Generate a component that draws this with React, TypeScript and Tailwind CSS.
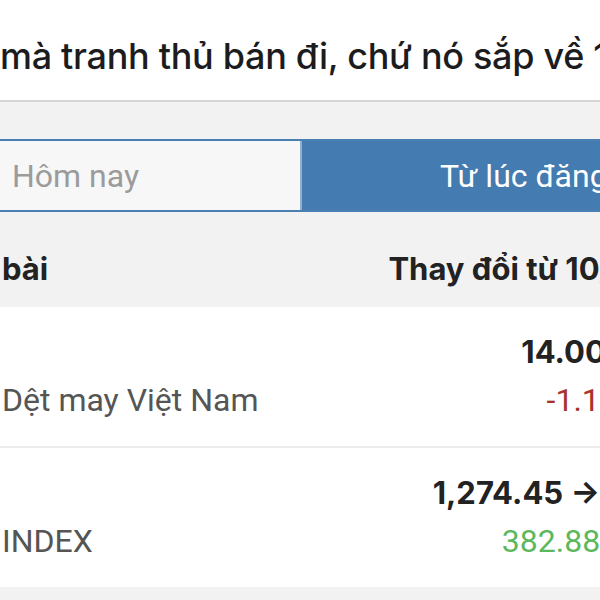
const rows = [
  { label: 'Dệt may Việt Nam', value: '14.00 → 12.90', change: '-1.10 (−7.9%)', tone: 'text-[#a9322c]' },
  { label: 'INDEX', value: '1,274.45 → 1,657.33', change: '382.88 (30.04%)', tone: 'text-[#5cb85c]' },
];

export default function App() {
  return (
    <div className="w-[600px] h-[600px] overflow-hidden bg-[#f2f2f2] whitespace-nowrap">
      <div className="h-[102px] pt-[38px] bg-white border-b-2 border-[#d6d6d6] font-['Inter',sans-serif] font-medium text-[36px] leading-[36px] text-[#1c1c1e] tracking-[-0.3px]">
        mà tranh thủ bán đi, chứ nó sắp về 1.300 điểm
      </div>

      <div className="pt-[37px] -ml-[10px] w-[760px]">
        <div className="flex h-[73px] border-2 border-[#4a7fb2] font-['Roboto',sans-serif] text-[32px]">
          <div className="w-[310px] bg-[#f7f7f8] border-r-2 border-[#8fb0d0] flex items-center pl-[20px] text-[#9b9b9b]">
            Hôm nay
          </div>
          <div className="flex-1 bg-[#447bb0] flex items-center pl-[138px] text-white">
            Từ lúc đăng bài
          </div>
        </div>
      </div>

      <div className="h-[95px] w-[745px] flex items-start justify-between pt-[42px] pl-[2px] font-['Inter',sans-serif] font-bold text-[31px] leading-[30px] text-[#222]">
        <span>bài</span>
        <span>Thay đổi từ 10/03/2024</span>
      </div>

      <div className="bg-white w-[734px]">
        {rows.map((r, i) => (
          <div
            key={r.label}
            className={`flex justify-between items-end pl-[2px] pt-[30px] pb-[30px] ${i === 0 ? 'border-b-2 border-[#ededed]' : ''}`}
          >
            <span className="font-['Roboto',sans-serif] text-[32px] leading-[32px] text-[#555]">{r.label}</span>
            <div className="flex flex-col items-end gap-[17px]">
              <span className="font-['Inter',sans-serif] font-bold text-[31px] leading-[30px] text-[#222]">{r.value}</span>
              <span className={`font-['Roboto',sans-serif] text-[32px] leading-[32px] ${r.tone}`}>{r.change}</span>
            </div>
          </div>
        ))}
      </div>
    </div>
  );
}
